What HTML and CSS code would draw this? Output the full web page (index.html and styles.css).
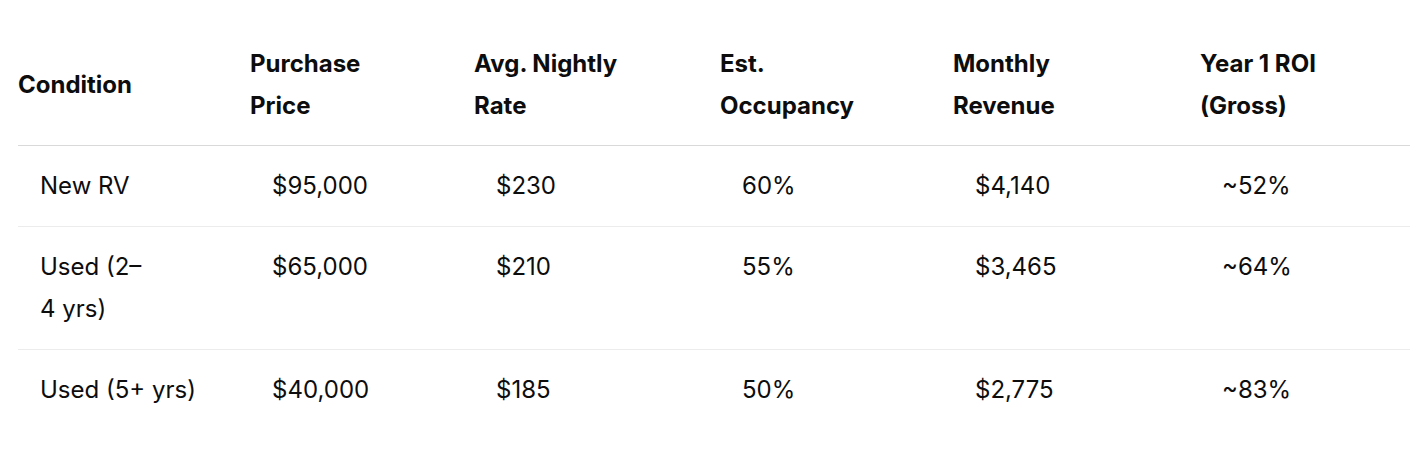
FILE: index.html
```html
<!DOCTYPE html>
<html lang="en">
<head>
<meta charset="utf-8">
<title>RV ROI</title>
<link rel="stylesheet" href="styles.css">
</head>
<body>
<div class="wrap">
  <table class="roi">
    <colgroup>
      <col class="c1"><col class="c2"><col class="c3"><col class="c4"><col class="c5"><col class="c6">
    </colgroup>
    <thead>
      <tr>
        <th>Condition</th>
        <th>Purchase Price</th>
        <th>Avg. Nightly Rate</th>
        <th>Est. Occupancy</th>
        <th>Monthly Revenue</th>
        <th>Year 1 ROI (Gross)</th>
      </tr>
    </thead>
    <tbody>
      <tr>
        <td>New RV</td><td>$95,000</td><td>$230</td><td>60%</td><td>$4,140</td><td>~52%</td>
      </tr>
      <tr>
        <td>Used (2–<wbr>4&nbsp;yrs)</td><td>$65,000</td><td>$210</td><td>55%</td><td>$3,465</td><td>~64%</td>
      </tr>
      <tr>
        <td>Used (5+ yrs)</td><td>$40,000</td><td>$185</td><td>50%</td><td>$2,775</td><td>~83%</td>
      </tr>
    </tbody>
  </table>
</div>
</body>
</html>
```
FILE: styles.css
```css
html, body {
  margin: 0;
  padding: 0;
  background: #ffffff;
}
body {
  font-family: Inter, "Liberation Sans", sans-serif;
  color: #0d0d0d;
  font-size: 24px;
  line-height: 42px;
}
.wrap {
  padding: 24px 0 0 18px;
}
.roi {
  border-collapse: collapse;
  table-layout: fixed;
  width: 1392px;
}
.c1 { width: 232px; }
.c2 { width: 224px; }
.c3 { width: 246px; }
.c4 { width: 233px; }
.c5 { width: 247px; }
.c6 { width: 210px; }
.roi th {
  text-align: left;
  font-weight: 700;
  vertical-align: middle;
  padding: 19px 70px 18px 0;
  border-bottom: 1px solid #d9d9d9;
}
.roi td {
  text-align: left;
  vertical-align: top;
  padding: 19px 46px 19px 22px;
  border-bottom: 1px solid #ececec;
}
.roi tbody tr:last-child td {
  border-bottom: none;
}
```
